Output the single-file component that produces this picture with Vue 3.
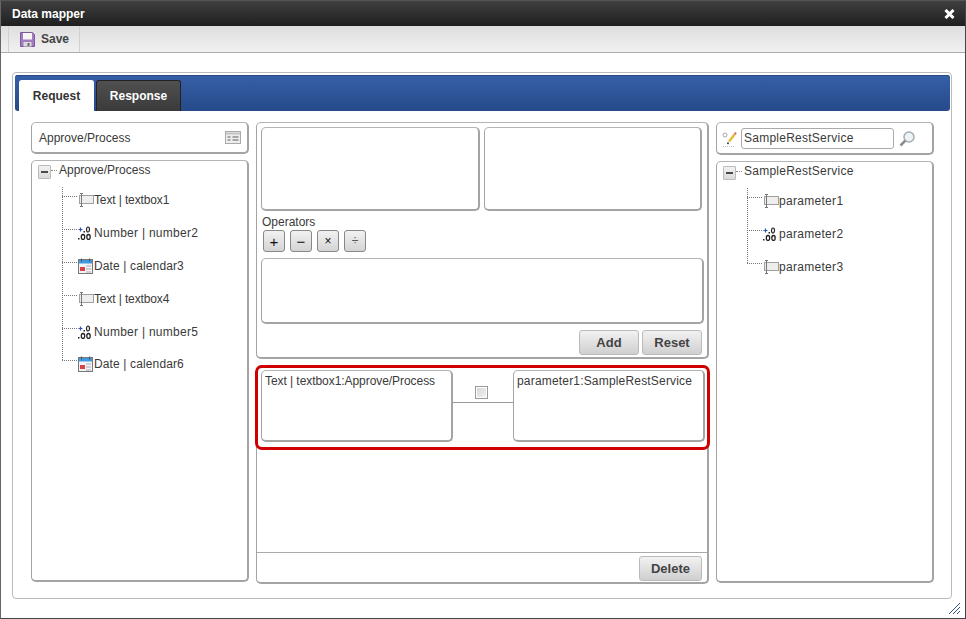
<script setup>
const leftRows = [
  { icon: 'text', label: 'Text | textbox1' },
  { icon: 'number', label: 'Number | number2' },
  { icon: 'date', label: 'Date | calendar3' },
  { icon: 'text', label: 'Text | textbox4' },
  { icon: 'number', label: 'Number | number5' },
  { icon: 'date', label: 'Date | calendar6' }
]
const rightRows = [
  { icon: 'text', label: 'parameter1' },
  { icon: 'number', label: 'parameter2' },
  { icon: 'text', label: 'parameter3' }
]
const operators = ['+', '−', '×', '÷']
</script>

<template>
  <div class="win">
    <header class="title">
      <span>Data mapper</span>
      <svg class="close" width="11" height="10" viewBox="0 0 11 10"><path d="M1.500 1l8 8M9.500 1l-8 8" stroke="#fff" stroke-width="3"/></svg>
    </header>
    <div class="toolbar">
      <div class="savebtn">
        <svg width="15" height="15" viewBox="0 0 15 15">
          <path d="M.5.5h12l2 2v12H.5z" fill="#a27cc0" stroke="#7a5a9c"/>
          <rect x="3" y="1" width="9" height="6.500" fill="#f6f6f6"/>
          <rect x="3.500" y="10" width="8" height="4.500" fill="#dcdcdc"/>
          <rect x="7.500" y="11" width="2" height="3" fill="#6a6a6a"/>
        </svg>
        <span>Save</span>
      </div>
    </div>
    <main class="body">
      <div class="outer">
        <div class="tabbar">
          <div class="tab active">Request</div>
          <div class="tab">Response</div>
        </div>
        <div class="cols">
          <section class="col left">
            <div class="box headbox">
              <span>Approve/Process</span>
              <svg width="16" height="13" viewBox="0 0 16 13">
                <rect x=".5" y=".5" width="15" height="12" fill="#eee" stroke="#aaa"/>
                <path d="M1 2.500h14" stroke="#c4c4c4" stroke-width="2"/>
                <path d="M2.500 6h3M2.500 9h3M7.500 6h6M7.500 9h6" stroke="#8e8e8e" stroke-width="1.500"/>
              </svg>
            </div>
            <div class="box tree">
              <div class="root">
                <span class="toggler"><i></i></span><span class="rootdots"></span><span>Approve/Process</span>
              </div>
              <ul class="rows">
                <li v-for="r in leftRows" :key="r.label" :class="r.icon">
                  <span class="conn"></span>
                  <svg v-if="r.icon === 'text'" class="ic" width="17" height="14" viewBox="0 0 17 14">
                    <rect x="2.500" y="2.500" width="14" height="8" fill="#eeeeee" stroke="#a0a0a0"/>
                    <path d="M3 .5h3M3 13.500h3M4.500 1v12" stroke="#777" fill="none"/>
                  </svg>
                  <svg v-else-if="r.icon === 'number'" class="ic" width="17" height="14" viewBox="0 0 17 14">
                    <path d="M1.500 3.500h4M3.500 1.500v4" stroke="#2a55c0" stroke-width="1.200"/>
                    <rect x="6.500" y="5" width="1.500" height="1.500" fill="#222"/>
                    <ellipse cx="11" cy="3.500" rx="1.500" ry="2.500" fill="none" stroke="#222" stroke-width="1.200"/>
                    <rect x="1" y="12" width="1.500" height="1.500" fill="#222"/>
                    <ellipse cx="6" cy="11" rx="1.700" ry="2.500" fill="none" stroke="#222" stroke-width="1.300"/>
                    <ellipse cx="11.500" cy="11" rx="1.700" ry="2.500" fill="none" stroke="#222" stroke-width="1.300"/>
                  </svg>
                  <svg v-else class="ic" width="17" height="16" viewBox="0 0 17 16">
                    <rect x="1.500" y="1.500" width="14" height="14" fill="#f4f4f4" stroke="#777"/>
                    <rect x="2" y="2" width="13" height="3.500" fill="#3e9ae0"/>
                    <path d="M4.500 .5v3M12.500 .5v3" stroke="#555"/>
                    <rect x="3" y="9" width="5" height="4" fill="#d8434a"/>
                    <path d="M9 8h5M9 11h5M9 14h5" stroke="#aab"/>
                  </svg>
                  <span class="lbl">{{ r.label }}</span>
                </li>
              </ul>
            </div>
          </section>

          <section class="mid">
            <div class="box builder">
              <div class="pair">
                <div class="box inner wider"></div>
                <div class="box inner"></div>
              </div>
              <div class="oplabel">Operators</div>
              <div class="ops">
                <button v-for="o in operators" :key="o" class="op">{{ o }}</button>
              </div>
              <div class="box expr"></div>
              <div class="actions">
                <button class="btn wide">Add</button>
                <button class="btn wide">Reset</button>
              </div>
            </div>
            <div class="box listing">
              <div class="mapping">
                <div class="box side st">Text | textbox1:Approve/Process</div>
                <div class="link"><input type="checkbox" class="chk" /></div>
                <div class="box side sp">parameter1:SampleRestService</div>
              </div>
              <div class="spacer"></div>
              <div class="foot"><button class="btn del">Delete</button></div>
            </div>
          </section>

          <section class="col right">
            <div class="box searchbox">
              <svg class="wand" width="17" height="17" viewBox="0 0 17 17">
                <circle cx="3" cy="4" r="2" fill="none" stroke="#a8a8a8"/>
                <path d="M7 10.500L12.500 3.500" stroke="#e6bc3c" stroke-width="2.500"/>
                <path d="M12.500 3.500L14 1.500" stroke="#d86a5a" stroke-width="2"/>
                <path d="M6.500 11.500l-1 1.500" stroke="#333" stroke-width="1.500"/>
                <path d="M1 15.500h12" stroke="#c0c0c0" stroke-dasharray="1 1"/>
              </svg>
              <div class="field">SampleRestService</div>
              <svg class="lens" width="16" height="16" viewBox="0 0 16 16">
                <circle cx="10" cy="6" r="5" fill="#eef3f6" stroke="#a2adb3" stroke-width="1.500"/>
                <path d="M6.300 9.700L1.500 14.500" stroke="#8a8a8a" stroke-width="2.500"/>
              </svg>
            </div>
            <div class="box tree">
              <div class="root">
                <span class="toggler"><i></i></span><span class="rootdots"></span><span class="rootname">SampleRestService</span>
              </div>
              <ul class="rows">
                <li v-for="r in rightRows" :key="r.label" class="param">
                  <span class="conn"></span>
                  <svg v-if="r.icon === 'text'" class="ic" width="17" height="14" viewBox="0 0 17 14">
                    <rect x="2.500" y="2.500" width="14" height="8" fill="#eeeeee" stroke="#a0a0a0"/>
                    <path d="M3 .5h3M3 13.500h3M4.500 1v12" stroke="#777" fill="none"/>
                  </svg>
                  <svg v-else class="ic" width="17" height="14" viewBox="0 0 17 14">
                    <path d="M1.500 3.500h4M3.500 1.500v4" stroke="#2a55c0" stroke-width="1.200"/>
                    <rect x="6.500" y="5" width="1.500" height="1.500" fill="#222"/>
                    <ellipse cx="11" cy="3.500" rx="1.500" ry="2.500" fill="none" stroke="#222" stroke-width="1.200"/>
                    <rect x="1" y="12" width="1.500" height="1.500" fill="#222"/>
                    <ellipse cx="6" cy="11" rx="1.700" ry="2.500" fill="none" stroke="#222" stroke-width="1.300"/>
                    <ellipse cx="11.500" cy="11" rx="1.700" ry="2.500" fill="none" stroke="#222" stroke-width="1.300"/>
                  </svg>
                  <span class="lbl">{{ r.label }}</span>
                </li>
              </ul>
            </div>
          </section>
        </div>
      </div>
      <svg class="grip" width="13" height="12" viewBox="0 0 13 12">
        <path d="M1 12L12 1M5 12l7-7M9 12l3-3" stroke="#34567c" stroke-width="1"/>
      </svg>
    </main>
  </div>
</template>

<style>
html, body { margin: 0; background: #fff; }
</style>

<style scoped>
.win {
  width: 966px; height: 619px; box-sizing: border-box; display: flex; flex-direction: column;
  border: 1px solid #444; border-top-color: #555; border-left-color: #666;
  font: 12px "Liberation Sans", Arial, sans-serif; color: #3a3a3a; background: #fff; overflow: hidden;
}
.title {
  height: 25px; flex: none; display: flex; align-items: center; justify-content: space-between;
  padding: 0 10px 0 11px; background: linear-gradient(#3f3f3f, #1f1f1f);
  color: #fff; font-weight: bold; font-size: 12px;
}
.toolbar {
  height: 27px; flex: none; box-sizing: border-box; background: linear-gradient(#dedede, #f1f1f1);
  border-bottom: 1px solid #aaa; padding-left: 7px; display: flex;
}
.savebtn {
  width: 72px; box-sizing: border-box; border: 1px solid #d0d0d0; border-width: 0 1px;
  display: flex; align-items: center; gap: 6px; padding-left: 11px; font-weight: bold; color: #444;
}
.body { flex: 1; position: relative; padding: 19px 12px 19px 11px; display: flex; min-height: 0; }
.outer {
  flex: 1; box-sizing: border-box; border: 1px solid #bbb; border-radius: 4px; padding: 2px 1px 0 2px;
  display: flex; flex-direction: column; margin-right: 1px;
}
.tabbar {
  height: 36px; flex: none; box-sizing: border-box; padding: 5px 0 0 4px; display: flex; gap: 2px;
  background: linear-gradient(#3660a8, #264a8a); border-radius: 3px; box-shadow: inset 0 1px #2a4a88;
}
.tab {
  width: 85px; height: 31px; box-sizing: border-box; border: 1px solid #222; border-bottom: 0;
  border-radius: 3px 3px 0 0; background: linear-gradient(#505050, #3a3a3a);
  color: #fff; font-weight: bold; display: flex; align-items: center; justify-content: center;
}
.tab.active { width: 75px; background: #fff; color: #333; border-color: #fff; }
.cols { flex: 1; display: flex; padding: 11px 0 14px 16px; min-height: 0; }
.box { box-sizing: border-box; border: 2px solid #a4a4a4; border-top-color: #b4b4b4; border-radius: 5px; background: #fff; border-width: 1px 2px 2px 1px; }
.col { flex: none; display: flex; flex-direction: column; gap: 6px; }
.left { width: 218px; margin-bottom: 2px; }
.right { width: 218px; margin-bottom: 1px; }
.headbox { height: 32px; flex: none; display: flex; align-items: center; justify-content: space-between; padding: 0 6px 0 7px; }
.tree { flex: 1; }
.root { height: 18px; display: flex; align-items: flex-start; padding: 2px 0 0 6px; box-sizing: border-box; line-height: 14px; }
.toggler {
  width: 13px; height: 14px; box-sizing: border-box; border: 1px solid #bbb; background: linear-gradient(#f2f2f2, #dadada);
  border-radius: 1px; display: flex; align-items: center; justify-content: center; margin-top: 2px;
}
.toggler i { width: 7px; height: 2px; background: #4a4a4a; display: block; }
.rootdots { width: 6px; border-top: 1px dotted #888; margin: 7px 2px 0 0; }
.rootname { letter-spacing: .25px; }
.rows { list-style: none; margin: 4px 0 0 30px; padding: 0; position: relative; }
.rows::before { content: ""; position: absolute; left: 0; top: 4px; bottom: 20px; border-left: 1px dotted #777; }
.rows li { height: 33px; display: flex; align-items: center; }
.rows li.date:last-child { margin-top: -1px; }
.conn { width: 15px; flex: none; border-top: 1px dotted #777; margin-bottom: 7px; }
.ic { flex: none; }
.number .lbl { letter-spacing: .27px; }
.date .lbl { letter-spacing: .13px; }
.text .lbl { letter-spacing: -.13px; }
.param .lbl { letter-spacing: .3px; }
.mid { flex: none; width: 453px; margin: 0 7px; display: flex; flex-direction: column; gap: 6px; }
.builder { height: 237px; flex: none; padding: 4px 4px 0 4px; }
.pair { display: flex; gap: 4px; }
.inner { width: 218px; height: 84px; }
.wider { width: 219px; }
.oplabel { margin: 4px 0 0 1px; height: 14px; }
.ops { display: flex; gap: 5px; margin: 1px 0 0 2px; }
.op {
  width: 22px; height: 22px; padding: 0; box-sizing: border-box; border: 1px solid #888; border-radius: 3px;
  background: linear-gradient(#f2f2f2, #d4d4d4); font: 15px "Liberation Sans", Arial, sans-serif; color: #111;
}
.op:nth-child(3) { font-size: 12px; }
.op:nth-child(4) { font-size: 12px; color: #555; }
.expr { height: 66px; margin-top: 6px; width: 443px; }
.actions { display: flex; justify-content: flex-end; gap: 3px; margin: 6px 1px 0 0; }
.btn {
  height: 25px; padding: 0; box-sizing: border-box; border: 1px solid #bbb; border-radius: 3px;
  background: linear-gradient(#f2f2f2, #cfcfcf); font: bold 13px "Liberation Sans", Arial, sans-serif; color: #444;
}
.wide { width: 60px; }
.listing { flex: 1; display: flex; flex-direction: column; min-height: 0; }
.mapping {
  height: 85px; flex: none; box-sizing: border-box; margin: -1px -3px 0 -2px; display: flex;
  border: 3px solid #d00000; border-radius: 7px; padding: 2px 2px 5px 3px; background: #fff;
}
.side { width: 192px; flex: none; padding: 3px 3px; line-height: 15px; }
.st { letter-spacing: -.06px; }
.sp { letter-spacing: .18px; }
.link {
  flex: 1; display: flex; justify-content: center; align-items: flex-start; padding: 16px 3px 0 0;
  background: linear-gradient(#999, #999) center 32px / 100% 1px no-repeat;
}
.chk {
  margin: 0; width: 13px; height: 13px; box-sizing: border-box; appearance: none; border: 1px solid #999;
  background: linear-gradient(135deg, #d4d4d4, #f4f4f4); box-shadow: inset 0 0 0 1px #fff;
}
.spacer { flex: 1; }
.foot {
  height: 30px; flex: none; box-sizing: border-box; border-top: 1px solid #aaa; display: flex;
  justify-content: flex-end; align-items: flex-start; padding: 3px 5px 0 0;
}
.del { width: 63px; }
.searchbox { height: 33px; flex: none; display: flex; align-items: flex-start; padding: 5px 0 0 5px; }
.wand { margin-top: 3px; }
.lens { margin: 3px 0 0 5px; }
.field {
  width: 153px; height: 21px; box-sizing: border-box; border: 1px solid #aaa; border-radius: 3px; padding-left: 2px;
  line-height: 19px; margin-left: 2px; letter-spacing: .25px;
}
.grip { position: absolute; right: 4px; bottom: 4px; }
</style>
